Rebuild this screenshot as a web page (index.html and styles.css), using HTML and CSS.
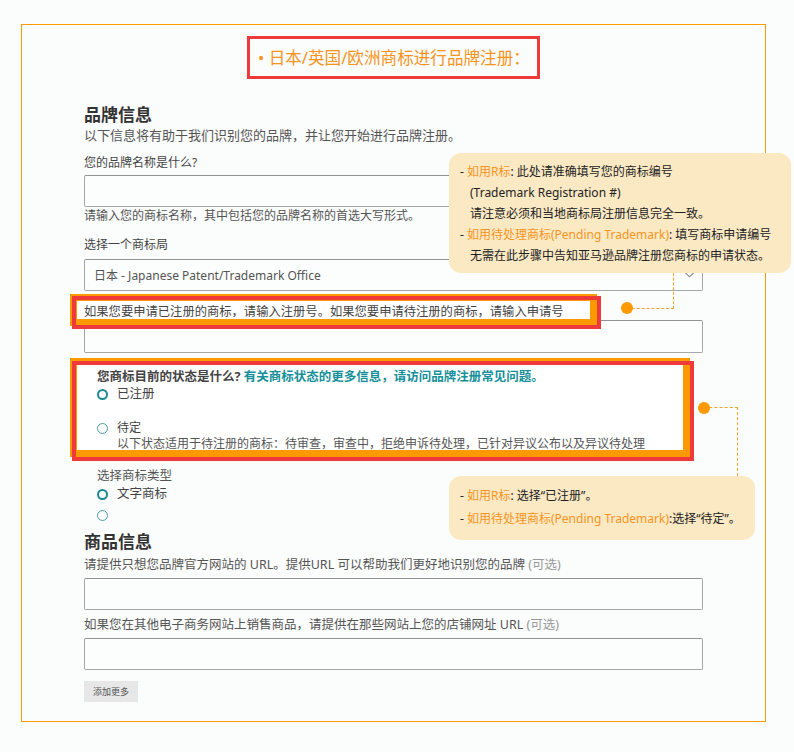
FILE: index.html
```html
<!DOCTYPE html>
<html lang="zh-CN">
<head>
<meta charset="utf-8">
<title>品牌注册</title>
<link rel="stylesheet" href="styles.css">
</head>
<body>
<div class="frame">
  <div class="title-row"><div class="title">• 日本/英国/欧洲商标进行品牌注册：</div></div>
  <div class="form">
    <h2 class="h">品牌信息</h2>
    <p class="sub">以下信息将有助于我们识别您的品牌，并让您开始进行品牌注册。</p>
    <div class="lbl">您的品牌名称是什么?</div>
    <div class="input"></div>
    <p class="hint">请输入您的商标名称，其中包括您的品牌名称的首选大写形式。</p>
    <div class="lbl lbl-gap">选择一个商标局</div>
    <div class="input select">
      <span>日本 - Japanese Patent/Trademark Office</span>
      <svg class="chev" width="11" height="7" viewBox="0 0 11 7"><polyline points="0.5,0.8 5.5,5.8 10.5,0.8" fill="none" stroke="#888" stroke-width="1.1"/></svg>
    </div>
    <div class="lbl mark mark1">如果您要申请已注册的商标，请输入注册号。如果您要申请待注册的商标，请输入申请号</div>
    <div class="input input2"></div>
    <div class="status mark mark2">
      <div class="q">您商标目前的状态是什么? <span class="link">有关商标状态的更多信息，请访问品牌注册常见问题。</span></div>
      <div class="radio-row"><span class="radio on"></span>已注册</div>
      <div class="radio-row pend"><span class="radio"></span>待定</div>
      <div class="desc">以下状态适用于待注册的商标：待审查，审查中，拒绝申诉待处理，已针对异议公布以及异议待处理</div>
    </div>
    <div class="type">
      <div class="type-lbl">选择商标类型</div>
      <div class="radio-row r1"><span class="radio on"></span>文字商标</div>
      <div class="radio-row r2"><span class="radio"></span></div>
    </div>
    <h2 class="h h2b">商品信息</h2>
    <p class="sub2">请提供只想您品牌官方网站的 URL。提供URL 可以帮助我们更好地识别您的品牌 <span class="opt">(可选)</span></p>
    <div class="input input3"></div>
    <div class="lbl2">如果您在其他电子商务网站上销售商品，请提供在那些网站上您的店铺网址 URL <span class="opt">(可选)</span></div>
    <div class="input input3"></div>
    <button class="more">添加更多</button>
  </div>

  <div class="conn conn1"></div>
  <div class="dot dot1"></div>
  <div class="tip tip1">
    <div>- <span class="o">如用R标</span>: 此处请准确填写您的商标编号</div>
    <div class="ind">(Trademark Registration #)</div>
    <div class="ind">请注意必须和当地商标局注册信息完全一致。</div>
    <div>- <span class="o">如用待处理商标(Pending Trademark)</span>: 填写商标申请编号</div>
    <div class="ind">无需在此步骤中告知亚马逊品牌注册您商标的申请状态。</div>
  </div>

  <div class="conn conn2"></div>
  <div class="dot dot2"></div>
  <div class="tip tip2">
    <div>- <span class="o">如用R标</span>: 选择“已注册”。</div>
    <div>- <span class="o">如用待处理商标(Pending Trademark)</span>:选择“待定”。</div>
  </div>
</div>
</body>
</html>
```

FILE: styles.css
```css
* { box-sizing: border-box; }
html, body { margin: 0; padding: 0; }
body {
  background: #fbfcfc;
  font-family: "Noto Sans", "Noto Sans CJK SC", sans-serif;
  color: #444;
  width: 794px;
  height: 752px;
  overflow: hidden;
}
.frame {
  position: relative;
  margin: 24px 0 0 21px;
  width: 745px;
  border: 1px solid #ff9900;
  padding-bottom: 19px;
}
.title-row {
  padding-top: 11px;
  text-align: center;
}
.title {
  display: inline-block;
  border: 3px solid #ee3a3a;
  padding: 0 7px 0 8px;
  line-height: 37px;
  font-size: 16.6px;
  color: #f7941d;
}
.form { padding-left: 62px; }
.h {
  margin: 25px 0 0;
  font-size: 17px;
  line-height: 22px;
  font-weight: bold;
  color: #333;
}
.h2b { margin-top: 8px; }
.sub {
  margin: 0;
  font-size: 13px;
  line-height: 18px;
  color: #555;
}
.lbl {
  margin-top: 10px;
  font-size: 12px;
  line-height: 18px;
  color: #444;
}
.lbl-gap { margin-top: 12px; }
.input {
  width: 619px;
  height: 32px;
  margin-top: 3px;
  background: #fcfdfd;
  border: 1px solid #a6a6a6;
  border-top-color: #8f9393;
  border-radius: 2px;
}
.hint {
  margin: 1px 0 0;
  font-size: 12px;
  line-height: 16px;
  color: #555;
}
.select {
  margin-top: 5px;
  display: flex;
  align-items: center;
  justify-content: space-between;
  padding: 0 7px 0 9px;
  font-size: 12px;
  color: #555;
}
.chev { margin-top: -2px; }

.mark { position: relative; z-index: 1; }
.mark::before, .mark::after {
  content: "";
  position: absolute;
  z-index: -1;
}
.mark::before { border: 7px solid #ff9900; background: #fff; }
.mark::after { border: 4px solid #ee3a3a; }

.mark1 {
  margin-top: 12px;
  font-size: 12.3px;
  width: 619px;
}
.mark1::before { left: -14px; top: -9px; right: 106px; bottom: -5px; }
.mark1::after { left: -12px; top: -7px; right: 102px; bottom: -8px; }

.input2 { margin-top: -1px; height: 33px; }

.status {
  margin-top: 15px;
  width: 619px;
  padding-left: 13px;
  font-size: 12px;
}
.mark2::before { left: -14px; top: -10px; right: 13px; bottom: -5px; }
.mark2::after { left: -12px; top: -7px; right: 9px; bottom: -9px; }
.q {
  font-size: 12.5px;
  line-height: 18px;
  font-weight: bold;
  color: #444;
}
.link { color: #16909a; }
.radio-row {
  display: flex;
  align-items: center;
  height: 16px;
  line-height: 16px;
  font-size: 12.5px;
  color: #444;
}
.pend { margin-top: 18px; font-size: 12px; }
.radio {
  display: inline-block;
  flex: none;
  width: 11px;
  height: 11px;
  margin-right: 9px;
  border-radius: 50%;
  border: 1px solid #4a9ca3;
  background: #fdfefe;
}
.radio.on { border: 2.5px solid #1b8a94; }
.desc {
  padding-left: 20px;
  font-size: 12px;
  line-height: 16px;
  color: #555;
}
.type {
  margin-top: 16px;
  padding-left: 13px;
}
.type-lbl {
  font-size: 12.5px;
  line-height: 16px;
  color: #555;
}
.r1 { margin-top: 2px; }
.r2 { margin-top: 5px; }
.sub2 {
  margin: 4px 0 0;
  font-size: 12.5px;
  line-height: 16px;
  color: #555;
}
.opt { color: #999; }
.input3 { margin-top: 5px; }
.lbl2 {
  margin-top: 7px;
  font-size: 12.5px;
  line-height: 16px;
  color: #555;
}
.more {
  display: block;
  margin-top: 11px;
  width: 54px;
  height: 21px;
  padding: 0;
  border: none;
  background: #e7e7e7;
  font-family: "Noto Sans CJK SC", sans-serif;
  font-size: 9px;
  color: #555;
}

.tip {
  position: absolute;
  z-index: 3;
  background: #fbe9c4;
  border-radius: 12px;
  padding-left: 11px;
  font-size: 12px;
  color: #222;
}
.tip .o { color: #f7941d; }
.tip1 {
  left: 427px;
  top: 128px;
  width: 342px;
  height: 120px;
  padding-top: 8px;
  line-height: 21px;
}
.tip1 .ind { padding-left: 10px; }
.tip2 {
  left: 427px;
  top: 451px;
  width: 306px;
  height: 64px;
  padding-top: 8px;
  line-height: 23px;
}
.dot {
  position: absolute;
  z-index: 3;
  width: 12px;
  height: 12px;
  border-radius: 50%;
  background: #ff9900;
}
.dot1 { left: 599px; top: 277px; }
.dot2 { left: 676px; top: 377px; }
.conn {
  position: absolute;
  z-index: 2;
  border: 0 dashed #f5a02a;
}
.conn1 {
  left: 605px;
  top: 248px;
  width: 47px;
  height: 36px;
  border-right-width: 1px;
  border-bottom-width: 1px;
}
.conn2 {
  left: 682px;
  top: 382px;
  width: 34px;
  height: 69px;
  border-top-width: 1px;
  border-right-width: 1px;
}
```
